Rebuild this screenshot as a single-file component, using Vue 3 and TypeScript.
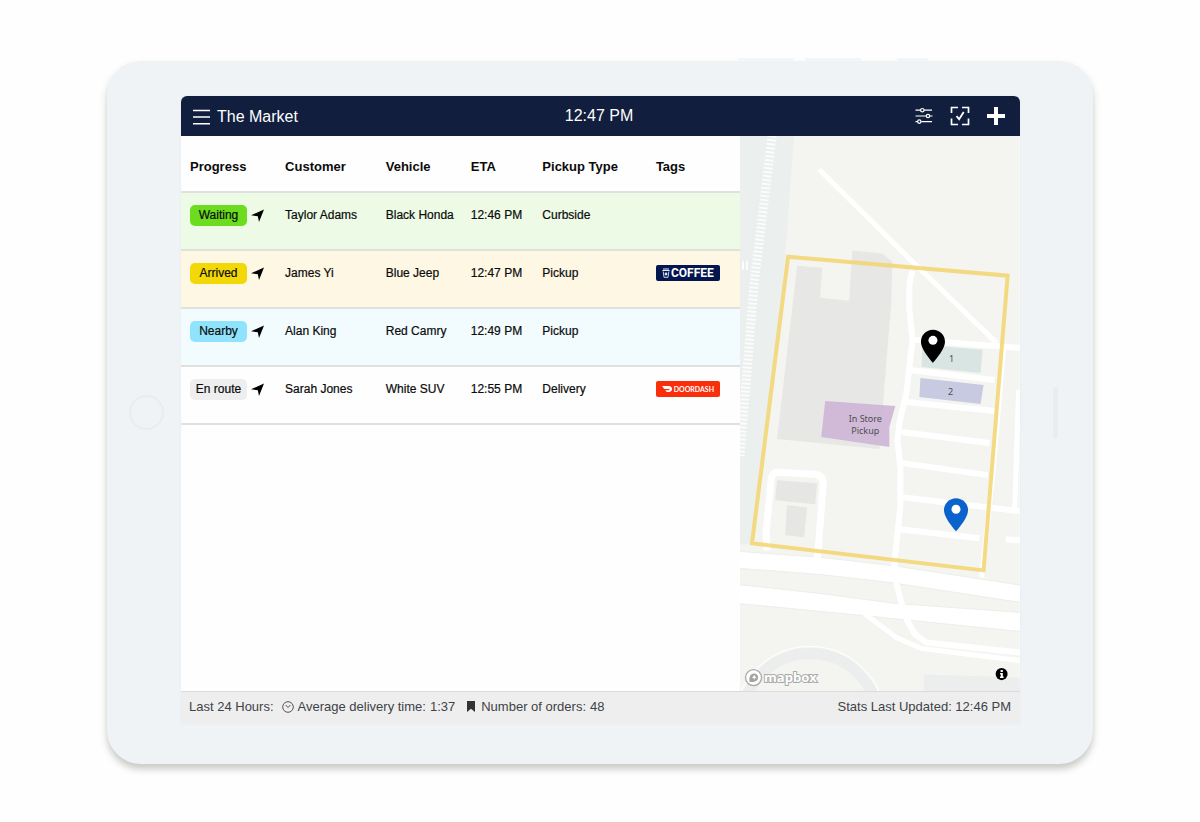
<script setup lang="ts">
interface Order {
  status: string
  tone: string
  customer: string
  vehicle: string
  eta: string
  type: string
  tag?: 'coffee' | 'doordash'
}

const columns: string[] = ['Progress', 'Customer', 'Vehicle', 'ETA', 'Pickup Type', 'Tags']

const orders: Order[] = [
  { status: 'Waiting', tone: 'green', customer: 'Taylor Adams', vehicle: 'Black Honda', eta: '12:46 PM', type: 'Curbside' },
  { status: 'Arrived', tone: 'yellow', customer: 'James Yi', vehicle: 'Blue Jeep', eta: '12:47 PM', type: 'Pickup', tag: 'coffee' },
  { status: 'Nearby', tone: 'blue', customer: 'Alan King', vehicle: 'Red Camry', eta: '12:49 PM', type: 'Pickup' },
  { status: 'En route', tone: 'plain', customer: 'Sarah Jones', vehicle: 'White SUV', eta: '12:55 PM', type: 'Delivery', tag: 'doordash' },
]
</script>

<template>
  <div class="page">
    <div class="tablet">
      <i class="key key-a"></i><i class="key key-b"></i><i class="key key-c"></i>
      <i class="home"></i><i class="speaker"></i>
      <div class="screen">
        <header class="bar">
          <div class="brand">
            <button type="button" class="icon-btn" aria-label="Menu">
              <svg width="17" height="16" viewBox="0 0 17 16" fill="none" stroke="#fff" stroke-width="1.4"><path d="M0 1.5h17M0 8h17M0 14.7h17" /></svg>
            </button>
            <h1>The Market</h1>
          </div>
          <time class="clock">12:47 PM</time>
          <div class="actions">
            <button type="button" class="icon-btn" aria-label="Filters">
              <svg width="18" height="18" viewBox="0 0 18 18" fill="none" stroke="#fff" stroke-width="1.2">
                <path d="M.5 3.2h5M9 3.2h8M.5 9h10.5M15 9h2.5M.5 14.6h2M6.300 14.6H17" />
                <circle cx="7.300" cy="3.200" r="1.700" /><circle cx="13" cy="9" r="1.700" /><circle cx="4.300" cy="14.600" r="1.700" />
              </svg>
            </button>
            <button type="button" class="icon-btn" aria-label="Check in">
              <svg width="20" height="20" viewBox="0 0 20 20" fill="none" stroke="#fff" stroke-width="1.700">
                <path d="M1.500 7V1.500H8M12 1.500h6.500V7M18.500 12.500v6H12M8 18.500H1.500v-6" />
                <path d="M6.500 10.200l2.600 3 4.600-7.200" stroke-width="1.800" />
              </svg>
            </button>
            <button type="button" class="icon-btn" aria-label="Add order">
              <svg width="18" height="18" viewBox="0 0 18 18" fill="none" stroke="#fff" stroke-width="4"><path d="M9 0v18M0 9h18" /></svg>
            </button>
          </div>
        </header>

        <main class="content">
          <section class="orders">
            <table>
              <colgroup>
                <col class="c-progress" /><col class="c-customer" /><col class="c-vehicle" />
                <col class="c-eta" /><col class="c-type" /><col class="c-tags" />
              </colgroup>
              <thead>
                <tr><th v-for="c in columns" :key="c" scope="col">{{ c }}</th></tr>
              </thead>
              <tbody>
                <tr v-for="o in orders" :key="o.customer" :class="o.tone">
                  <td>
                    <div class="progress">
                      <span class="status">{{ o.status }}</span>
                      <svg width="13" height="13" viewBox="0 0 13 13"><path d="M13 .5L8 13 6.800 7.200 0 6.200z" fill="#000" /></svg>
                    </div>
                  </td>
                  <td>{{ o.customer }}</td>
                  <td>{{ o.vehicle }}</td>
                  <td>{{ o.eta }}</td>
                  <td>{{ o.type }}</td>
                  <td>
                    <span v-if="o.tag === 'coffee'" class="tag coffee">
                      <svg width="8" height="10" viewBox="0 0 8 10">
                        <path d="M1 1h6M.3 2.500h7.400" stroke="#dfe5f5" stroke-width="1" fill="none" />
                        <path d="M1.200 3.500L2 9.300h4l.8-5.800" stroke="#dfe5f5" stroke-width=".9" fill="none" />
                        <circle cx="4" cy="6" r="1.400" fill="#dfe5f5" />
                      </svg>COFFEE
                    </span>
                    <span v-else-if="o.tag === 'doordash'" class="tag doordash">
                      <svg width="10" height="6" viewBox="0 0 10 6"><path d="M0 0h6.800C8.900 0 10 1.400 10 3S8.800 6 7 6H4.800L3.200 4.300h3.700c.5 0 .8-.3.8-.7s-.3-.7-.8-.7H2.300z" fill="#fff" /></svg>DOORDASH
                    </span>
                  </td>
                </tr>
              </tbody>
            </table>
          </section>

          <section class="map" aria-label="Store map">
            <svg class="map-art" viewBox="0 0 279 555" preserveAspectRatio="xMidYMid slice">
              <rect width="279" height="555" fill="#f4f5f1" />
              <path d="M0 0H54L43 149 20 330 11 408H0z" fill="#ebefee" />
              <path d="M32 0L14 149 0 320" stroke="#fbfcfc" stroke-width="9" stroke-dasharray="2 2" fill="none" />
              <path d="M3 125v9M7 125v9" stroke="#fbfcfc" stroke-width="2" />
              <path d="M57 130l25 2-2 30 29 3 3-50 30 3 10 8-1 40-12 147-102-10z" fill="#e7e7e5" />
              <path d="M37 344l40 3-2 21-40-4zM47 369l20 2-3 30-19-2z" fill="#e6e6e4" />
              <path d="M184 538l95 3v14h-96z" fill="#ebeeed" />
              <circle cx="70" cy="585" r="68" fill="none" stroke="#ebeeec" stroke-width="11" />
              <circle cx="70" cy="585" r="75" fill="none" stroke="#fff" stroke-width="1" />
              <path d="M-2 415L80 421 150 429 281 449V466L150 446 80 438-2 432zM-2 448L80 457 156 467 281 476V495L122 479-2 467z" fill="#fff" stroke="#eceeea" stroke-width="1" />
              <g fill="none" stroke="#fff" stroke-width="6" stroke-linejoin="round">
                <path d="M79 34L172 126 196 149 256 207" stroke-width="5" />
                <path d="M172 135L169 148V174L172 204 166 257 159 287 157 304 160 331V370L154 427 156 447 161 466 167 484 174 497 186 506 279 516" />
                <path d="M124 477L156 501 181 512 279 524" stroke-width="5" />
                <path d="M172 204L279 212M169 234L254 244M166 266L254 275M161 296L249 307M162 327L247 339M162 361L279 375M159 393L239 402M265 403L279 404" />
                <path d="M263 211L253 330 241 441M278 254L274 374" stroke-width="5" />
                <path d="M27 414L26 397 31 344Q32 335 40 336L74 338Q83 339 83 347L77 427" stroke-width="7" />
              </g>
              <path d="M182 209L242 214 240 237 181 231z" fill="#d8e5e3" />
              <path d="M180 242L243 249 240 268 179 261z" fill="#c7cae1" />
              <path d="M85 265L155 270 149 291 149 311 81 301z" fill="#cdb5d6" fill-opacity=".9" />
              <path d="M48 121L267 140 243 434 12 407z" fill="none" stroke="#f2d672" stroke-opacity=".88" stroke-width="4" />
              <g class="map-label" text-anchor="middle">
                <text x="211" y="226">1</text>
                <text x="210" y="259">2</text>
                <text x="125" y="286">In Store</text>
                <text x="125" y="298">Pickup</text>
              </g>
              <path d="M192.500 194a12 12 0 0 0-12 12c0 8 12 21 12 21s12-13 12-21a12 12 0 0 0-12-12z" fill="#000" />
              <circle cx="192.500" cy="204.500" r="4.500" fill="#fff" />
              <path d="M215.500 362a12 12 0 0 0-12 12c0 8 12 21 12 21s12-13 12-21a12 12 0 0 0-12-12z" fill="#0a62cc" />
              <circle cx="215.500" cy="373" r="4.500" fill="#fff" />
              <circle cx="13.500" cy="541" r="8" fill="#fff" stroke="#aaa" stroke-width="1.300" />
              <path d="M9.500 545.200c-.7-4 .4-8.400 4.600-8.400 2.300 0 4 1.700 4 3.900 0 4.200-4.500 5.200-8.600 4.500z" fill="#a2a4a2" />
              <path d="M14.200 538.200l.8 1.700 1.700.8-1.700.8-.8 1.700-.8-1.700-1.700-.8 1.700-.8z" fill="#fff" />
              <text class="mapbox" x="24" y="545">mapbox</text>
              <circle cx="261" cy="537.500" r="6" fill="#000" />
              <path d="M260 533.500h2.200v1.800H260zM259.500 536.500h2.700v3.500h.8v1.300h-3.600V540h.8v-2.200h-.7z" fill="#fff" />
            </svg>
          </section>
        </main>

        <footer class="stats">
          <span class="period">Last 24 Hours:</span>
          <span class="stat">
            <svg width="12" height="12" viewBox="0 0 12 12" fill="none" stroke="#555" stroke-width="1"><circle cx="6" cy="6" r="5.300" /><path d="M3.700 4L6 6.500 8.400 4" /></svg>
            Average delivery time: <span class="value">1:37</span>
          </span>
          <span class="stat orders-stat">
            <svg width="8" height="11" viewBox="0 0 8 11"><path d="M0 0h8v11L4 7.800 0 11z" fill="#333" /></svg>
            Number of orders: <span class="value">48</span>
          </span>
          <span class="updated">Stats Last Updated: 12:46 PM</span>
        </footer>
      </div>
    </div>
  </div>
</template>

<style>
body {
  margin: 0;
  background: #fefefe;
}
</style>

<style scoped>
.page {
  box-sizing: border-box;
  min-height: 100vh;
  padding: 61px 107px 58px;
  display: flex;
  font-family: "Liberation Sans", Arial, Helvetica, sans-serif;
  color: #0b0b0b;
}
.tablet {
  position: relative;
  flex: 1;
  display: flex;
  padding: 35px 73px 40px 74px;
  background: #eff3f6;
  border-radius: 34px;
  box-shadow: 0 5px 7px rgba(60, 60, 50, 0.28);
}
.key {
  position: absolute;
  top: -3px;
  height: 3px;
  width: 56px;
  background: #f3f5f6;
}
.key-a { right: 299px; }
.key-b { right: 232px; }
.key-c { right: 165px; width: 31px; }
.home {
  position: absolute;
  box-sizing: border-box;
  left: 22px;
  top: 50%;
  width: 35px;
  height: 35px;
  margin-top: -18px;
  border: 2px solid #e9ecef;
  border-radius: 50%;
}
.speaker {
  position: absolute;
  right: 35px;
  top: 50%;
  width: 5px;
  height: 51px;
  margin-top: -26px;
  border-radius: 2px;
  background: #eaedef;
}
.screen {
  flex: 1;
  min-width: 0;
  display: flex;
  flex-direction: column;
  overflow: hidden;
  border-radius: 6px 6px 0 0;
  background: #fefefe;
  box-shadow: 0 0 1px rgba(0, 0, 0, 0.15);
}
.bar {
  height: 40px;
  box-sizing: border-box;
  padding: 0 15px 0 12px;
  display: grid;
  grid-template-columns: 1fr auto 1fr;
  align-items: center;
  background: #111e3e;
  color: #fff;
}
.brand {
  display: flex;
  align-items: center;
  gap: 7px;
  padding-top: 2px;
}
h1 {
  margin: 0;
  font-size: 16px;
  line-height: 20px;
  font-weight: 400;
}
.clock {
  font-size: 16px;
  line-height: 20px;
}
.actions {
  display: flex;
  justify-content: flex-end;
  align-items: center;
  gap: 17px;
}
.icon-btn {
  display: flex;
  padding: 0;
  border: 0;
  background: none;
  cursor: pointer;
}
.content {
  flex: 1;
  display: grid;
  grid-template-columns: 2fr 1fr;
}
table {
  width: 100%;
  table-layout: fixed;
  border-collapse: separate;
  border-spacing: 0;
}
.c-progress { width: 17%; }
.c-customer { width: 18%; }
.c-vehicle { width: 15.2%; }
.c-eta { width: 12.8%; }
.c-type { width: 20.3%; }
.c-tags { width: 16.7%; }
th,
td {
  box-sizing: border-box;
  padding: 0 0 0 9px;
  border-bottom: 2px solid #dfe1dd;
  text-align: left;
  vertical-align: top;
  white-space: nowrap;
}
th {
  height: 57px;
  padding-top: 21px;
  font-size: 13px;
  line-height: 20px;
  font-weight: 700;
}
td {
  height: 58px;
  padding-top: 12px;
  font-size: 12px;
  line-height: 21px;
  -webkit-text-stroke: 0.2px #0b0b0b;
}
.green td { background: #edfbe6; }
.yellow td { background: #fef7e3; }
.blue td { background: #f2fcfe; }
.progress {
  display: flex;
  align-items: center;
  gap: 4px;
}
.status {
  width: 57px;
  height: 21px;
  border-radius: 5px;
  text-align: center;
  background: #eeeeee;
}
.green .status { background: #6cdc1e; }
.yellow .status { background: #f2d807; }
.blue .status { background: #90e3fc; }
.tag {
  box-sizing: border-box;
  display: flex;
  align-items: center;
  justify-content: center;
  width: 64px;
  height: 16px;
  margin-top: 2px;
  border-radius: 2px;
  color: #fff;
  -webkit-text-stroke: 0;
}
.coffee {
  gap: 1px;
  background: #04164f;
  font: 700 12px/16px Roboto, sans-serif;
}
.doordash {
  gap: 2px;
  background: #fb2e0c;
  font: 700 7px/16px Lato, sans-serif;
}
.map {
  position: relative;
  min-height: 480px;
}
.map-art {
  position: absolute;
  width: 100%;
  height: 100%;
}
.map-label {
  font: 9px "Noto Sans", sans-serif;
  fill: #4e4e52;
}
.mapbox {
  font: 700 13px "Open Sans", sans-serif;
  fill: #fff;
  stroke: #a9aaa9;
  stroke-width: 2px;
  paint-order: stroke;
}
.stats {
  box-sizing: border-box;
  height: 33px;
  padding: 0 9px 3px 8px;
  display: flex;
  align-items: center;
  border-top: 1px solid #dadbdb;
  background: #eeeeef;
  color: #3f4246;
  font-size: 13px;
  line-height: 20px;
}
.stat {
  display: flex;
  align-items: center;
  gap: 4px;
  margin-left: 8px;
}
.orders-stat {
  margin-left: 12px;
}
.orders-stat svg {
  margin-right: 2px;
}
.updated {
  margin-left: auto;
}
</style>
